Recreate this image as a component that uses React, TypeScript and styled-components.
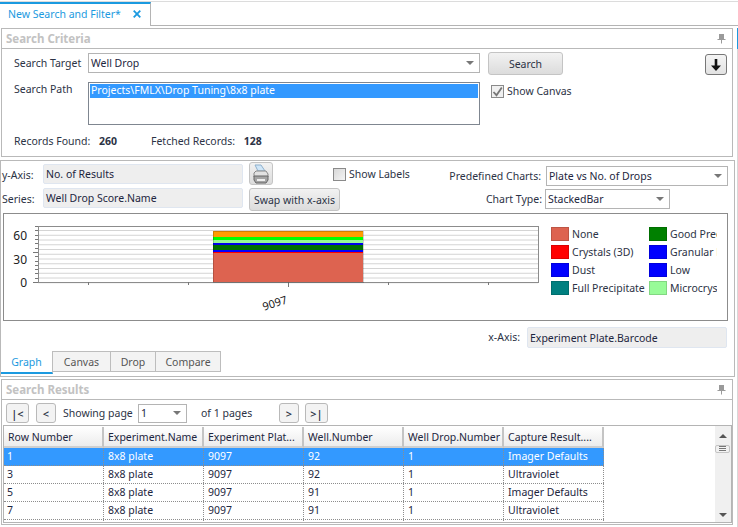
import React from "react";
import styled, { createGlobalStyle } from "styled-components";

const Global = createGlobalStyle`
  html, body { margin: 0; padding: 0; background: #fff; }
  body { font-family: "Noto Sans", "Liberation Sans", sans-serif; font-size: 10.5px; color: #2c3345; }
  * { box-sizing: border-box; }
`;

const Page = styled.div`
  width: 738px; height: 526px; overflow: hidden; position: relative; background: #fff;
  border-top: 1px solid #dcdcdc; margin-top: 1px;
`;
const TabStrip = styled.div`
  height: 24px; display: flex; border-bottom: 1px solid #b4b4b4; width: 738px;
`;
const DocTab = styled.div`
  width: 151px; height: 24px; border-top: 2px solid #1b9ae0; border-right: 1px solid #b4b4b4;
  background: #fff; color: #1b9ae0; display: flex; align-items: center; padding: 0 9px 2px 8px;
  white-space: nowrap; justify-content: space-between;
`;
const Workspace = styled.div`
  display: flex; flex-direction: column; position: relative;
`;
const SideRail = styled.div`
  position: absolute; top: 2px; left: 737px; width: 1px; height: 500px; background: #d8d8d8;
  &::before { content: ""; display: block; height: 21px; background: #1b9ae0; }
`;
const Panel = styled.section<{ $mt: number; $ml: number; $w: number; $h: number }>`
  margin-top: ${(p) => p.$mt}px; margin-left: ${(p) => p.$ml}px; width: ${(p) => p.$w}px; height: ${(p) => p.$h}px;
  border: 1px solid #b9b9b9; display: flex; flex-direction: column; background: #fff; overflow: hidden; flex: none;
`;
const PanelHeader = styled.header`
  height: 20px; flex: none; border-bottom: 1px solid #b9b9b9; display: flex; align-items: center;
  justify-content: space-between; padding: 0 6px 0 4px; color: #c2c2c2; font-weight: 700; font-size: 11.5px;
`;
const CriteriaBody = styled.div`
  display: flex; flex-direction: column; padding: 4px 5px 0 12px;
`;
const Row = styled.div<{ $h?: number }>`
  display: flex; align-items: flex-start;
  ${(p) => (p.$h ? `height: ${p.$h}px;` : "")}
`;
const FieldLabel = styled.label<{ $w?: number; $right?: boolean; $top?: number; $push?: boolean }>`
  flex: none; white-space: nowrap; color: #2c3345; line-height: 15px;
  ${(p) => (p.$w ? `width: ${p.$w}px;` : "")}
  ${(p) => (p.$right ? "text-align: right;" : "")}
  ${(p) => (p.$push ? "margin-left: auto;" : "")}
  margin-top: ${(p) => p.$top ?? 0}px;
`;
const AxisLabel = styled(FieldLabel)`
  margin-left: 1px; width: 41px;
`;
const Select = styled.div<{ $w: number; $h?: number; $mt?: number; $ml?: number; $mr?: number }>`
  width: ${(p) => p.$w}px; height: ${(p) => p.$h ?? 20}px; flex: none; border: 1px solid #b4b4b4; background: #fff;
  display: flex; align-items: center; justify-content: space-between; padding: 0 5px 0 2px; color: #1d2640;
  margin: ${(p) => p.$mt ?? 0}px ${(p) => p.$mr ?? 0}px 0 ${(p) => p.$ml ?? 0}px;
  &::after { content: ""; border-left: 4px solid transparent; border-right: 4px solid transparent; border-top: 4px solid #777; }
`;
const Button = styled.button<{ $w: number; $h: number; $ml?: number; $mt?: number }>`
  width: ${(p) => p.$w}px; height: ${(p) => p.$h}px; flex: none; border: 1px solid #c4c4c4; border-radius: 3px;
  background: linear-gradient(#f2f2f2, #dcdcdc); color: #2c3345; font: inherit; padding: 0;
  display: flex; align-items: center; justify-content: center;
  margin-left: ${(p) => p.$ml ?? 0}px; margin-top: ${(p) => p.$mt ?? 0}px;
`;
const ArrowButton = styled(Button)`
  border-color: #777; margin-left: auto; background: linear-gradient(#f4f4f4, #e2e2e2);
`;
const PathList = styled.div`
  width: 392px; height: 43px; flex: none; border: 1px solid #7f8690; padding: 1px;
`;
const PathItem = styled.div`
  height: 14px; background: #3399ff; color: #fff; line-height: 13px; padding-left: 1px;
`;
const CheckBox = styled.span<{ $checked?: boolean }>`
  width: 13px; height: 13px; flex: none; border: 1px solid #8a8a8a; background: ${(p) => (p.$checked ? "#f0f0f0" : "linear-gradient(135deg,#d8d8d8,#f4f4f4)")};
  display: inline-flex; align-items: center; justify-content: center;
`;
const CheckField = styled.div<{ $ml: number; $mt: number }>`
  display: flex; align-items: center; gap: 3px; margin-left: ${(p) => p.$ml}px; margin-top: ${(p) => p.$mt}px;
  white-space: nowrap; color: #2c3345; flex: none;
`;
const StatRow = styled.div`
  display: flex; margin-top: 9px; line-height: 15px; color: #2c3345;
`;
const Stat = styled.span<{ $w: number }>`
  width: ${(p) => p.$w}px; flex: none; white-space: nowrap;
  b { margin-left: 6px; font-weight: 700; }
`;
const GraphBody = styled.div`
  display: flex; flex-direction: column; flex: 1; min-height: 0; padding: 1px 0 0 0;
`;
const ReadOnly = styled.div<{ $w: number; $h?: number; $mt?: number; $ml?: number }>`
  width: ${(p) => p.$w}px; height: ${(p) => p.$h ?? 20}px; flex: none; background: #eeeeee; border: 1px solid #dfe6f0;
  border-radius: 2px; padding: 0 2px; display: flex; align-items: center; color: #1d2640;
  margin-left: ${(p) => p.$ml ?? 0}px; margin-top: ${(p) => p.$mt ?? 0}px;
`;
const ChartBox = styled.div`
  margin: 1px 0 0 2px; width: 725px; height: 108px; border: 1px solid #8c8c8c; flex: none; display: flex; background: #fff;
`;
const Legend = styled.div`
  margin: 13px 0 0 10px; width: 166px; height: 72px; overflow: hidden; flex: none;
  display: grid; grid-template-columns: 98px 68px; grid-auto-rows: 18px;
`;
const LegendItem = styled.div`
  display: flex; align-items: flex-start; gap: 3px; white-space: nowrap; overflow: hidden; line-height: 14px;
  color: #2c3345;
`;
const Swatch = styled.span<{ $c: string }>`
  width: 18px; height: 14px; flex: none; background: ${(p) => p.$c}; border: 1px solid rgba(0,0,0,.14);
`;
const XAxisRow = styled.div`
  display: flex; justify-content: flex-end; align-items: center; margin: 6px 7px 0 0; gap: 7px;
`;
const TabBar = styled.div`
  display: flex; margin-top: 3px; height: 24px; flex: none;
`;
const BottomTab = styled.div<{ $w: number; $active?: boolean }>`
  width: ${(p) => p.$w}px; flex: none; display: flex; align-items: center; justify-content: center;
  background: ${(p) => (p.$active ? "#fff" : "#f3f3f3")}; color: ${(p) => (p.$active ? "#1b9ae0" : "#555")};
  ${(p) => (p.$active
    ? "height: 23px; border-right: 1px solid #bdbdbd; border-bottom: 2px solid #1b9ae0;"
    : "height: 21px; border: 1px solid #bdbdbd; border-left: 0;")}
`;
const Pager = styled.div`
  display: flex; align-items: center; height: 24px; flex: none; padding: 2px 0 0 4px;
`;
const PagerButton = styled(Button)`
  font-size: 11px; border-color: #b9b9b9; background: #f3f3f3; font-weight: 600;
`;
const PagerText = styled.span<{ $ml: number; $w?: number }>`
  margin-left: ${(p) => p.$ml}px; white-space: nowrap; color: #2c3345; flex: none;
  ${(p) => (p.$w ? `width: ${p.$w}px;` : "")}
`;
const Grid = styled.div`
  margin: 1px 0 0 1px; width: 729px; height: 98px; border: 1px solid #b4b4b4; display: flex; overflow: hidden; flex: none;
`;
const GridTable = styled.div`
  width: 711px; flex: none; padding-top: 1px; overflow: hidden;
`;
const GridRow = styled.div<{ $selected?: boolean }>`
  display: grid; grid-template-columns: repeat(6, 100px); width: 600px; height: 18px;
  background: ${(p) => (p.$selected ? "#3399ff" : "#fff")}; color: ${(p) => (p.$selected ? "#fff" : "#1d2640")};
  border-bottom: 1px dotted #8d8d8d;
`;
const GridCell = styled.div`
  padding-left: 4px; border-right: 1px dotted #8d8d8d; line-height: 16px; white-space: nowrap; overflow: hidden;
  &:first-child { padding-left: 3px; }
`;
const HeaderRow = styled.div`
  display: grid; grid-template-columns: repeat(6, 100px); width: 600px; height: 21px;
`;
const HeaderCell = styled.div`
  padding: 0 4px; border-right: 2px solid #c4c4c4; border-bottom: 2px solid #cfcfcf; background: linear-gradient(#fff, #ececec);
  line-height: 20px; white-space: nowrap; overflow: hidden; color: #1d2640;
`;
const ScrollBar = styled.div`
  width: 17px; flex: none; background: #f0f0f0; position: relative;
`;
const ScrollArrow = styled.span<{ $up?: boolean; $top: number }>`
  width: 0; height: 0; border-left: 4px solid transparent; border-right: 4px solid transparent;
  ${(p) => (p.$up ? "border-bottom: 4px solid #555;" : "border-top: 4px solid #555;")}
  position: absolute; top: ${(p) => p.$top}px; left: 4px;
`;
const ScrollThumb = styled.span`
  position: absolute; top: 19px; left: 0; width: 15px; height: 8px; border: 1px solid #c4c4c4; border-radius: 2px;
  background: repeating-linear-gradient(#777 0 1px, #f4f4f4 1px 2px); background-size: 7px 100%; background-repeat: no-repeat; background-position: center;
`;

const Pin = () => (
  <svg width="9" height="11" viewBox="0 0 9 11">
    <path d="M2 1h5v5h1.500v1H5v3.500H4V7H.5V6H2z" fill="#9a9a9a" />
  </svg>
);
const CloseIcon = () => (
  <svg width="8" height="8" viewBox="0 0 8 8">
    <path d="M.7.7l6.600 6.600M7.300.7L.7 7.300" stroke="#1b9ae0" strokeWidth="1.800" />
  </svg>
);
const DownArrow = () => (
  <svg width="12" height="14" viewBox="0 0 12 14">
    <path d="M4.700 1h2.600v6.500H11L6 13 1 7.500h3.700z" fill="#111" />
  </svg>
);
const Check = () => (
  <svg width="11" height="11" viewBox="0 0 11 11">
    <path d="M1.500 6l3 3.200L9.800 1.500" stroke="#777" strokeWidth="1.800" fill="none" />
  </svg>
);
const Printer = () => (
  <svg width="18" height="20" viewBox="0 0 18 20">
    <path d="M3 1h6l4 6H6z" fill="#cfe6f8" stroke="#8fb0cc" />
    <path d="M2 9l2-2h10l2 3v3H2z" fill="#e2e2e2" stroke="#888" />
    <path d="M2 12h14v4l-2 3H4l-2-3z" fill="#a4a4a4" stroke="#666" />
    <path d="M5 15h8v2H5z" fill="#eee" />
  </svg>
);

const ticks = Array.from({ length: 14 }, (_, i) => 282 - i * 4.3);
const bands: [number, number, string][] = [
  [231, 6, "#ff9c00"],
  [237, 3, "#00ff00"],
  [240, 3, "#98fb98"],
  [243, 2, "#0000ee"],
  [245, 5, "#007000"],
  [250, 2, "#0000ff"],
  [252, 1, "#ff0000"],
  [253, 29, "#dd6350"],
];
const Chart = () => (
  <svg width="537" height="106" viewBox="4 214 537 106" style={{ flex: "none" }}>
    {Array.from({ length: 12 }, (_, i) => (
      <line key={i} x1="38" x2="538" y1={230.500 + i * 4.750} y2={230.500 + i * 4.750} stroke="#d4d4d4" />
    ))}
    <rect x="38.500" y="226.500" width="500" height="56" fill="none" stroke="#8c8c8c" />
    {ticks.map((y, i) => (
      <line key={i} x1={i % 7 === 0 ? 33 : 35} x2="38" y1={Math.round(y) + 0.5} y2={Math.round(y) + 0.5} stroke="#777" />
    ))}
    {[88, 188, 288, 388, 488].map((x, i) => (
      <line key={x} x1={x + 0.5} x2={x + 0.5} y1="282" y2={i === 2 ? 287 : 285} stroke="#777" />
    ))}
    {bands.map(([y, h, c]) => (
      <rect key={y} x="213" y={y} width="150" height={h} fill={c} />
    ))}
    <rect x="213.500" y="231.500" width="150" height="51" fill="none" stroke="#000" strokeOpacity="0.18" />
    <g fontFamily='"Noto Sans","Liberation Sans",sans-serif' fontSize="12" fill="#222">
      <text x="27" y="240" textAnchor="end">60</text>
      <text x="27" y="264" textAnchor="end">30</text>
      <text x="27" y="287" textAnchor="end">0</text>
      <text x="275" y="307" textAnchor="middle" fontSize="11" transform="rotate(-18 275 304)">9097</text>
    </g>
  </svg>
);

const legend: [string, string][] = [
  ["None", "#dd6350"], ["Good Precipitate", "#008000"],
  ["Crystals (3D)", "#ff0000"], ["Granular Precipitate", "#0000ff"],
  ["Dust", "#0000ff"], ["Low", "#0000ff"],
  ["Full Precipitate", "#008080"], ["Microcrystals", "#98fb98"],
];
const columns = ["Row Number", "Experiment.Name", "Experiment Plat...", "Well.Number", "Well Drop.Number", "Capture Result...."];
const rows = [
  ["1", "8x8 plate", "9097", "92", "1", "Imager Defaults"],
  ["3", "8x8 plate", "9097", "92", "1", "Ultraviolet"],
  ["5", "8x8 plate", "9097", "91", "1", "Imager Defaults"],
  ["7", "8x8 plate", "9097", "91", "1", "Ultraviolet"],
  ["", "", "", "", "", ""],
];

export default function App() {
  return (
    <Page>
      <Global />
      <TabStrip>
        <DocTab>New Search and Filter* <CloseIcon /></DocTab>
      </TabStrip>
      <Workspace>
        <SideRail />
        <Panel $mt={2} $ml={1} $w={732} $h={129}>
          <PanelHeader>Search Criteria <Pin /></PanelHeader>
          <CriteriaBody>
            <Row $h={29}>
              <FieldLabel $w={74} $top={3}>Search Target</FieldLabel>
              <Select $w={392} $mt={0}>Well Drop</Select>
              <Button $w={75} $h={23} $ml={8} $mt={-1}>Search</Button>
              <ArrowButton $w={22} $h={21} $mt={1}><DownArrow /></ArrowButton>
            </Row>
            <Row $h={43}>
              <FieldLabel $w={74}>Search Path</FieldLabel>
              <PathList><PathItem>Projects\FMLX\Drop Tuning\8x8 plate</PathItem></PathList>
              <CheckField $ml={11} $mt={2}><CheckBox $checked><Check /></CheckBox>Show Canvas</CheckField>
            </Row>
            <StatRow>
              <Stat $w={137}>Records Found: <b>260</b></Stat>
              <Stat $w={160}>Fetched Records: <b>128</b></Stat>
            </StatRow>
          </CriteriaBody>
        </Panel>
        <Panel $mt={3} $ml={0} $w={735} $h={217}>
          <GraphBody>
            <Row $h={25}>
              <AxisLabel $top={6}>y-Axis:</AxisLabel>
              <ReadOnly $w={200} $mt={2}>No. of Results</ReadOnly>
              <Button $w={24} $h={23} $ml={6} $mt={0}><Printer /></Button>
              <CheckField $ml={60} $mt={5}><CheckBox />Show Labels</CheckField>
              <FieldLabel $push $top={7}>Predefined Charts:</FieldLabel>
              <Select $w={182} $ml={5} $mt={4} $mr={6}>Plate vs No. of Drops</Select>
            </Row>
            <Row $h={25}>
              <AxisLabel $top={5}>Series:</AxisLabel>
              <ReadOnly $w={200} $mt={1}>Well Drop Score.Name</ReadOnly>
              <Button $w={91} $h={23} $ml={6} $mt={1}>Swap with x-axis</Button>
              <FieldLabel $w={202} $right $top={5}>Chart Type:</FieldLabel>
              <Select $w={125} $ml={3} $mt={2}>StackedBar</Select>
            </Row>
            <ChartBox>
              <Chart />
              <Legend>
                {legend.map(([name, c]) => (
                  <LegendItem key={name}><Swatch $c={c} />{name}</LegendItem>
                ))}
              </Legend>
            </ChartBox>
            <XAxisRow>
              <FieldLabel>x-Axis:</FieldLabel>
              <ReadOnly $w={200} $h={21}>Experiment Plate.Barcode</ReadOnly>
            </XAxisRow>
            <TabBar>
              <BottomTab $w={52} $active>Graph</BottomTab>
              <BottomTab $w={58}>Canvas</BottomTab>
              <BottomTab $w={45}>Drop</BottomTab>
              <BottomTab $w={65}>Compare</BottomTab>
            </TabBar>
          </GraphBody>
        </Panel>
        <Panel $mt={2} $ml={1} $w={732} $h={146}>
          <PanelHeader>Search Results <Pin /></PanelHeader>
          <Pager>
            <PagerButton $w={23} $h={20}>|&lt;</PagerButton>
            <PagerButton $w={20} $h={20} $ml={7}>&lt;</PagerButton>
            <PagerText $ml={7} $w={75}>Showing page</PagerText>
            <Select $w={49} $h={19}>1</Select>
            <PagerText $ml={14} $w={78}>of 1 pages</PagerText>
            <PagerButton $w={20} $h={20}>&gt;</PagerButton>
            <PagerButton $w={23} $h={20} $ml={6}>&gt;|</PagerButton>
          </Pager>
          <Grid>
            <GridTable>
              <HeaderRow>
                {columns.map((c) => <HeaderCell key={c}>{c}</HeaderCell>)}
              </HeaderRow>
              {rows.map((r, i) => (
                <GridRow key={i} $selected={i === 0}>
                  {r.map((v, j) => <GridCell key={j}>{v}</GridCell>)}
                </GridRow>
              ))}
            </GridTable>
            <ScrollBar>
              <ScrollArrow $up $top={8} />
              <ScrollThumb />
              <ScrollArrow $top={87} />
            </ScrollBar>
          </Grid>
        </Panel>
      </Workspace>
    </Page>
  );
}
